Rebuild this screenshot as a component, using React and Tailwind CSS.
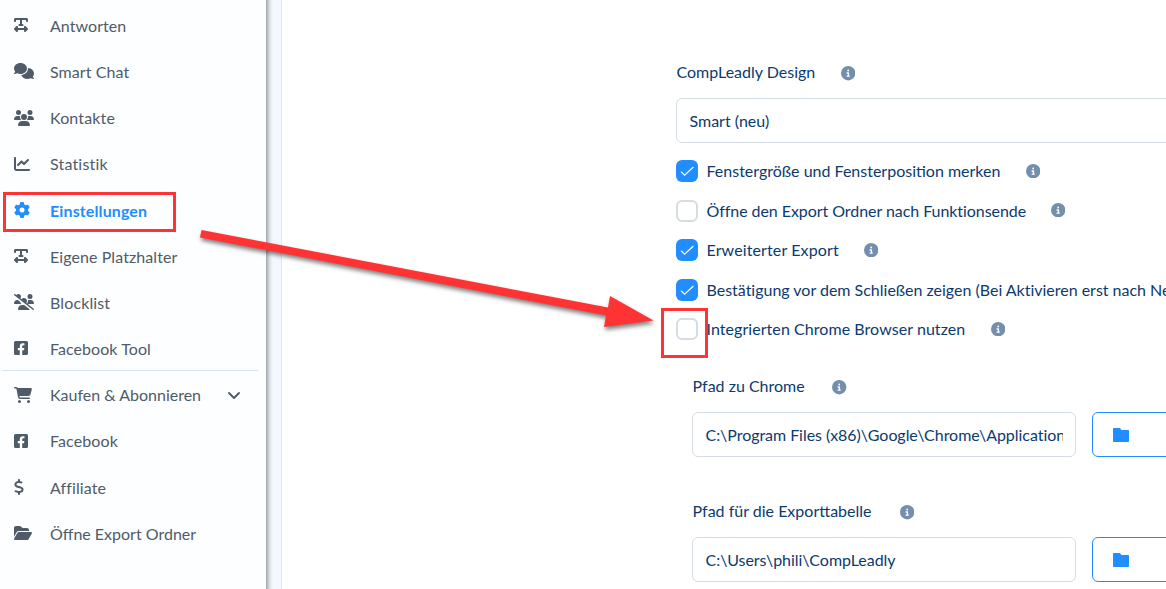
import {
  FaTextWidth, FaComments, FaUsers, FaChartLine, FaGear, FaUsersSlash,
  FaCartShopping, FaDollarSign, FaFolderOpen, FaCircleInfo,
} from "react-icons/fa6";
import { FaFacebookSquare } from "react-icons/fa";

const NAV = [
  { label: "Antworten", icon: FaTextWidth, width: "w-3.5", tracking: "tracking-[0.06px]" },
  { label: "Smart Chat", icon: FaComments, width: "w-5", tracking: "tracking-[0.08px]" },
  { label: "Kontakte", icon: FaUsers, width: "w-5", tracking: "tracking-[0.15px]" },
  { label: "Statistik", icon: FaChartLine, width: "w-4", tracking: "tracking-[0.18px]" },
  { label: "Einstellungen", icon: FaGear, width: "w-4", active: true, tracking: "tracking-[0.12px]" },
  { label: "Eigene Platzhalter", icon: FaTextWidth, width: "w-3.5", tracking: "tracking-[0.08px]" },
  { label: "Blocklist", icon: FaUsersSlash, width: "w-5", tracking: "tracking-[0.12px]" },
  { label: "Facebook Tool", icon: FaFacebookSquare, width: "w-3.5", tracking: "tracking-[0.06px]" },
  { label: "Kaufen & Abonnieren", icon: FaCartShopping, width: "w-[18px]", expandable: true },
  { label: "Facebook", icon: FaFacebookSquare, width: "w-3.5", tracking: "tracking-[0.12px]" },
  { label: "Affiliate", icon: FaDollarSign, width: "w-2.5", tracking: "tracking-[0.1px] pt-[0.6px]" },
  { label: "Öffne Export Ordner", icon: FaFolderOpen, width: "w-[18px]" },
];

function NavItem({ label, icon: Icon, width, active, expandable, tracking = "" }) {
  return (
    <li className={`relative flex h-[46.17px] items-center pl-3.5 ${active ? "font-bold text-[#228dff]" : "text-[#4f5b67]"}`}>
      {active && <span className="absolute left-[3px] top-[4.6px] h-10 w-[173px] border-3 border-[#ff3333]" />}
      <span className="mb-[1.2px] w-9">
        <Icon className={`h-4 ${width}`} />
      </span>
      <span className={`text-[16px] leading-6 ${tracking}`}>{label}</span>
      {expandable && (
        <svg className="absolute left-[227px] top-[18px] h-3 w-3.5" viewBox="0 0 14 12" fill="none" stroke="currentColor" strokeWidth="1.9">
          <path d="M2 3l5 5L12 3" strokeLinecap="round" strokeLinejoin="round" />
        </svg>
      )}
    </li>
  );
}

function Info({ className = "" }) {
  return <FaCircleInfo className={`size-[14.4px] shrink-0 text-[#748fae] ${className}`} />;
}

function FolderIcon() {
  return (
    <svg className="h-3.5 w-4" viewBox="0 0 16 14" fill="currentColor">
      <path d="M.8 0H7l1.4 2h6.8a.8.8 0 0 1 .8.8v10.4a.8.8 0 0 1-.8.8H.8a.8.8 0 0 1-.8-.8V.8A.8.8 0 0 1 .8 0z" />
    </svg>
  );
}

function Check({ label, checked, marked, height, tracking = "", infoClass }) {
  return (
    <div className={`relative flex items-start ${height}`}>
      <span className={`flex size-[22px] shrink-0 items-center justify-center rounded-md ${checked ? "bg-[#228dff]" : "border-2 border-[#d5dce4] bg-white"}`}>
        {checked && (
          <svg className="h-[22px] w-[22px]" viewBox="0 0 22 22" fill="none" stroke="#fff" strokeWidth="1.1">
            <path d="M5 11.6l3.6 3.6L17.4 7" />
          </svg>
        )}
      </span>
      <span className={`ml-[8.5px] whitespace-nowrap leading-[22px] ${tracking}`}>{label}</span>
      {infoClass && <Info className={infoClass} />}
      {marked && <span className="absolute -left-[15px] -top-[10px] h-[50px] w-[47px] border-3 border-[#ff3333]" />}
    </div>
  );
}

function PathField({ label, value, tracking = "", infoClass }) {
  return (
    <div className="h-[125px] pl-4">
      <div className="flex h-[22px] items-center pl-[0.5px]">
        <span className="leading-[22px]">{label}</span>
        <Info className={infoClass} />
      </div>
      <div className="mt-[15px] flex gap-4">
        <div className="flex h-[45px] w-96 shrink-0 items-center rounded-md border border-[#d5dce4] px-3">
          <span className={`w-full overflow-hidden whitespace-nowrap pl-[0.5px] ${tracking}`}>{value}</span>
        </div>
        <div className="flex h-[45px] w-40 shrink-0 items-center rounded-md border border-[#228dff] pl-5 text-[#228dff]">
          <FolderIcon />
        </div>
      </div>
    </div>
  );
}

export default function App() {
  return (
    <div className="relative flex h-[589px] w-[1166px] overflow-hidden bg-white font-['Lato',sans-serif] text-[16px] text-[#0b3a6f]">
      <aside className="relative z-10 w-[266px] shrink-0 bg-[#fdfeff] pt-[2.82px]">
        <ul>
          {NAV.map((item) => <NavItem key={item.label} {...item} />)}
        </ul>
        <div className="absolute left-0.5 top-[370px] h-px w-64 bg-[#dce4ec]" />
      </aside>
      <div className="w-4 shrink-0 border-r border-[#e2e7ed] bg-[linear-gradient(to_right,#a5a8ad_0px,#b9bcc2_1.5px,#d3d7df_3px,#e8ecf4_5px,#f3f7ff_7px)]" />
      <main className="flex-1 overflow-hidden pl-[394px] pt-[61px]">
        <div className="flex h-[22px] items-center pl-[0.5px]">
          <span>CompLeadly Design</span>
          <Info className="ml-[25.5px] mt-[3px]" />
        </div>
        <div className="mb-[17px] mt-[15px] flex h-[45px] w-[600px] items-center rounded-md border border-[#d5dce4] pl-[12.5px]">
          Smart (neu)
        </div>
        <Check label="Fenstergröße und Fensterposition merken" checked height="h-10" infoClass="ml-[25.5px] mt-1" />
        <Check label="Öffne den Export Ordner nach Funktionsende" height="h-[39px]" tracking="tracking-[-0.06px]" infoClass="ml-[24.7px] mt-[3px]" />
        <Check label="Erweiterter Export" checked height="h-10" tracking="tracking-[0.12px]" infoClass="ml-[25px] mt-1" />
        <Check label="Bestätigung vor dem Schließen zeigen (Bei Aktivieren erst nach Neustart)" checked height="h-[39px]" tracking="tracking-[-0.01px]" />
        <Check label="Integrierten Chrome Browser nutzen" marked height="h-[57px]" tracking="tracking-[0.06px]" infoClass="ml-[25.5px] mt-1" />
        <PathField label="Pfad zu Chrome" value="C:\Program Files (x86)\Google\Chrome\Application\chrome.exe" tracking="tracking-[-0.045px]" infoClass="ml-[27.5px] mt-[3px]" />
        <PathField label="Pfad für die Exporttabelle" value="C:\Users\phili\CompLeadly" tracking="tracking-[-0.03px]" infoClass="ml-[28.3px] mt-[3px]" />
      </main>
      <svg className="pointer-events-none absolute inset-0 z-20 h-full w-full drop-shadow-[1px_3px_2px_rgba(0,0,0,0.5)]" viewBox="0 0 1166 589">
        <path d="M201.5 230L608 307.5L610 296L653.5 320.5L604 327L606 315.5L200 237.5Z" fill="#ff3333" />
      </svg>
    </div>
  );
}
